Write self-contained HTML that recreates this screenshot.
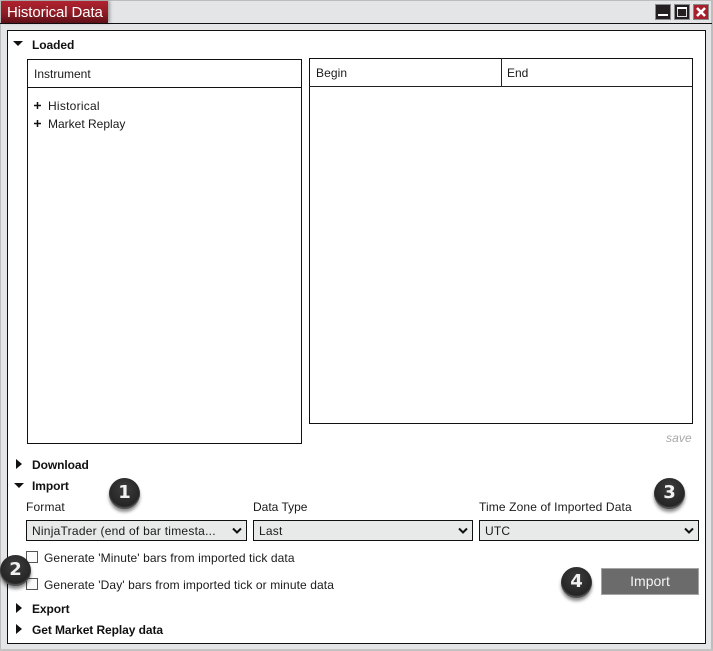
<!DOCTYPE html>
<html><head><meta charset="utf-8">
<style>
*{box-sizing:border-box}
html,body{margin:0;padding:0}
body{width:713px;height:651px;position:relative;overflow:hidden;background:#e4e5e7;font-family:"Liberation Sans",sans-serif;font-size:12px;color:#1a1a1a}
.a{position:absolute}
.t{position:absolute;white-space:nowrap;line-height:14px}
.b{font-weight:bold;color:#111;letter-spacing:-.08px}
.box{position:absolute;border:1px solid #111;background:#fff}
.sel{position:absolute;height:21px;top:520px;background:#e8e9e9;border:1px solid #111;line-height:20px;padding-left:5px;font-size:12px;letter-spacing:.2px}
.sel svg{position:absolute;right:3px;top:6px}
.cb{position:absolute;width:12px;height:12px;border:1px solid #555;background:#fbfbfb}
.n{position:absolute;width:31px;height:31px;border-radius:50%;background:radial-gradient(circle at 50% 35%,#3d3d3d,#222 75%);box-shadow:0 3px 3px rgba(0,0,0,.45),inset 0 -2px 1px #555;color:#f2f2f2;font-family:"DejaVu Sans",sans-serif;font-weight:bold;font-size:18px;line-height:30px;text-align:center}
</style></head><body>
<div class="a" style="left:0;top:0;width:713px;height:1px;background:#bdbdbd"></div>
<div class="a" style="left:0;top:0;width:1px;height:651px;background:#bdbdbd"></div>
<div class="a" style="right:0;top:0;width:2px;height:651px;background:#bdbdbd"></div>
<div class="a" style="left:0;bottom:0;width:713px;height:2px;background:#c4c4c4"></div>
<div class="a" style="left:0;top:23px;width:712px;height:1px;background:#111"></div>
<div class="a" style="left:1px;top:1px;width:107px;height:22px;background:linear-gradient(#b0222e,#8f1c26 55%,#5e1018);box-shadow:2px 0 3px rgba(0,0,0,.3)"></div>
<div class="t" style="left:7px;top:4px;font-size:15px;line-height:18px;color:#fff;letter-spacing:-.12px">Historical Data</div>

<svg class="a" style="left:655px;top:4px" width="54" height="16" viewBox="0 0 54 16">
<rect x=".5" y=".5" width="15" height="15" fill="#231f20" stroke="#8a8a8a"/>
<rect x="3" y="10" width="10" height="2" fill="#fff"/>
<rect x="19.500" y=".5" width="15" height="15" fill="#231f20" stroke="#8a8a8a"/>
<rect x="22.500" y="3.500" width="9" height="9" fill="none" stroke="#ddd"/>
<rect x="22" y="3" width="10" height="2" fill="#fff"/>
<rect x="38.500" y=".5" width="15" height="15" fill="#a81f2c" stroke="#8a8a8a"/>
<path d="M42 4L50 12M50 4L42 12" stroke="#fff" stroke-width="2.600"/>
</svg>

<div class="box" style="left:7px;top:30px;width:699px;height:614px"></div>

<svg class="a" style="left:13px;top:41px" width="11" height="6"><path d="M0 0H10L5 5Z" fill="#111"/></svg>
<div class="t b" style="left:32px;top:38px">Loaded</div>

<div class="box" style="left:27px;top:59px;width:275px;height:385px"></div>
<div class="a" style="left:27px;top:87px;width:275px;height:1px;background:#111"></div>
<div class="t" style="left:34px;top:67px">Instrument</div>
<svg class="a" style="left:34px;top:102px" width="7" height="7"><path d="M0 3.500H7M3.500 0V7" stroke="#111" stroke-width="1.500"/></svg>
<div class="t" style="left:48px;top:99px;letter-spacing:.25px">Historical</div>
<svg class="a" style="left:34px;top:120px" width="7" height="7"><path d="M0 3.500H7M3.500 0V7" stroke="#111" stroke-width="1.500"/></svg>
<div class="t" style="left:48px;top:117px">Market Replay</div>

<div class="box" style="left:309px;top:58px;width:384px;height:366px"></div>
<div class="a" style="left:309px;top:86px;width:384px;height:1px;background:#222"></div>
<div class="a" style="left:501px;top:58px;width:1px;height:29px;background:#222"></div>
<div class="t" style="left:316px;top:66px;letter-spacing:.1px">Begin</div>
<div class="t" style="left:507px;top:66px">End</div>
<div class="t" style="left:666px;top:431px;font-style:italic;color:#a8a8a8;letter-spacing:.1px">save</div>

<svg class="a" style="left:16px;top:459px" width="7" height="11"><path d="M0 0V10L6 5Z" fill="#111"/></svg>
<div class="t b" style="left:32px;top:458px">Download</div>
<svg class="a" style="left:14px;top:483px" width="11" height="6"><path d="M0 0H10L5 5Z" fill="#111"/></svg>
<div class="t b" style="left:32px;top:479px">Import</div>

<div class="t" style="left:26px;top:500px;letter-spacing:.15px">Format</div>
<div class="t" style="left:253px;top:500px">Data Type</div>
<div class="t" style="left:479px;top:500px;letter-spacing:.12px">Time Zone of Imported Data</div>

<div class="sel" style="left:26px;width:221px;letter-spacing:.24px">NinjaTrader (end of bar timesta...
<svg width="12" height="8"><path d="M2 1.500L6 5.500L10 1.500" fill="none" stroke="#111" stroke-width="2"/></svg></div>
<div class="sel" style="left:253px;width:220px">Last
<svg width="12" height="8"><path d="M2 1.500L6 5.500L10 1.500" fill="none" stroke="#111" stroke-width="2"/></svg></div>
<div class="sel" style="left:479px;width:220px">UTC
<svg width="12" height="8"><path d="M2 1.500L6 5.500L10 1.500" fill="none" stroke="#111" stroke-width="2"/></svg></div>

<div class="cb" style="left:26px;top:551px"></div>
<div class="t" style="left:44px;top:551px;letter-spacing:.1px">Generate 'Minute' bars from imported tick data</div>
<div class="cb" style="left:26px;top:578px"></div>
<div class="t" style="left:44px;top:578px;letter-spacing:.1px">Generate 'Day' bars from imported tick or minute data</div>

<div class="a" style="left:601px;top:568px;width:98px;height:27px;background:#6b6b6b;border:1px solid #a5a5a5;color:#f4f4f4;font-size:14px;line-height:25px;text-align:center">Import</div>

<svg class="a" style="left:16px;top:603px" width="7" height="11"><path d="M0 0V10L6 5Z" fill="#111"/></svg>
<div class="t b" style="left:32px;top:602px">Export</div>
<svg class="a" style="left:16px;top:624px" width="7" height="11"><path d="M0 0V10L6 5Z" fill="#111"/></svg>
<div class="t b" style="left:32px;top:623px">Get Market Replay data</div>

<div class="n" style="left:109px;top:478px">1</div>
<div class="n" style="left:0;top:555px">2</div>
<div class="n" style="left:654px;top:478px">3</div>
<div class="n" style="left:561px;top:567px">4</div>
</body></html>
